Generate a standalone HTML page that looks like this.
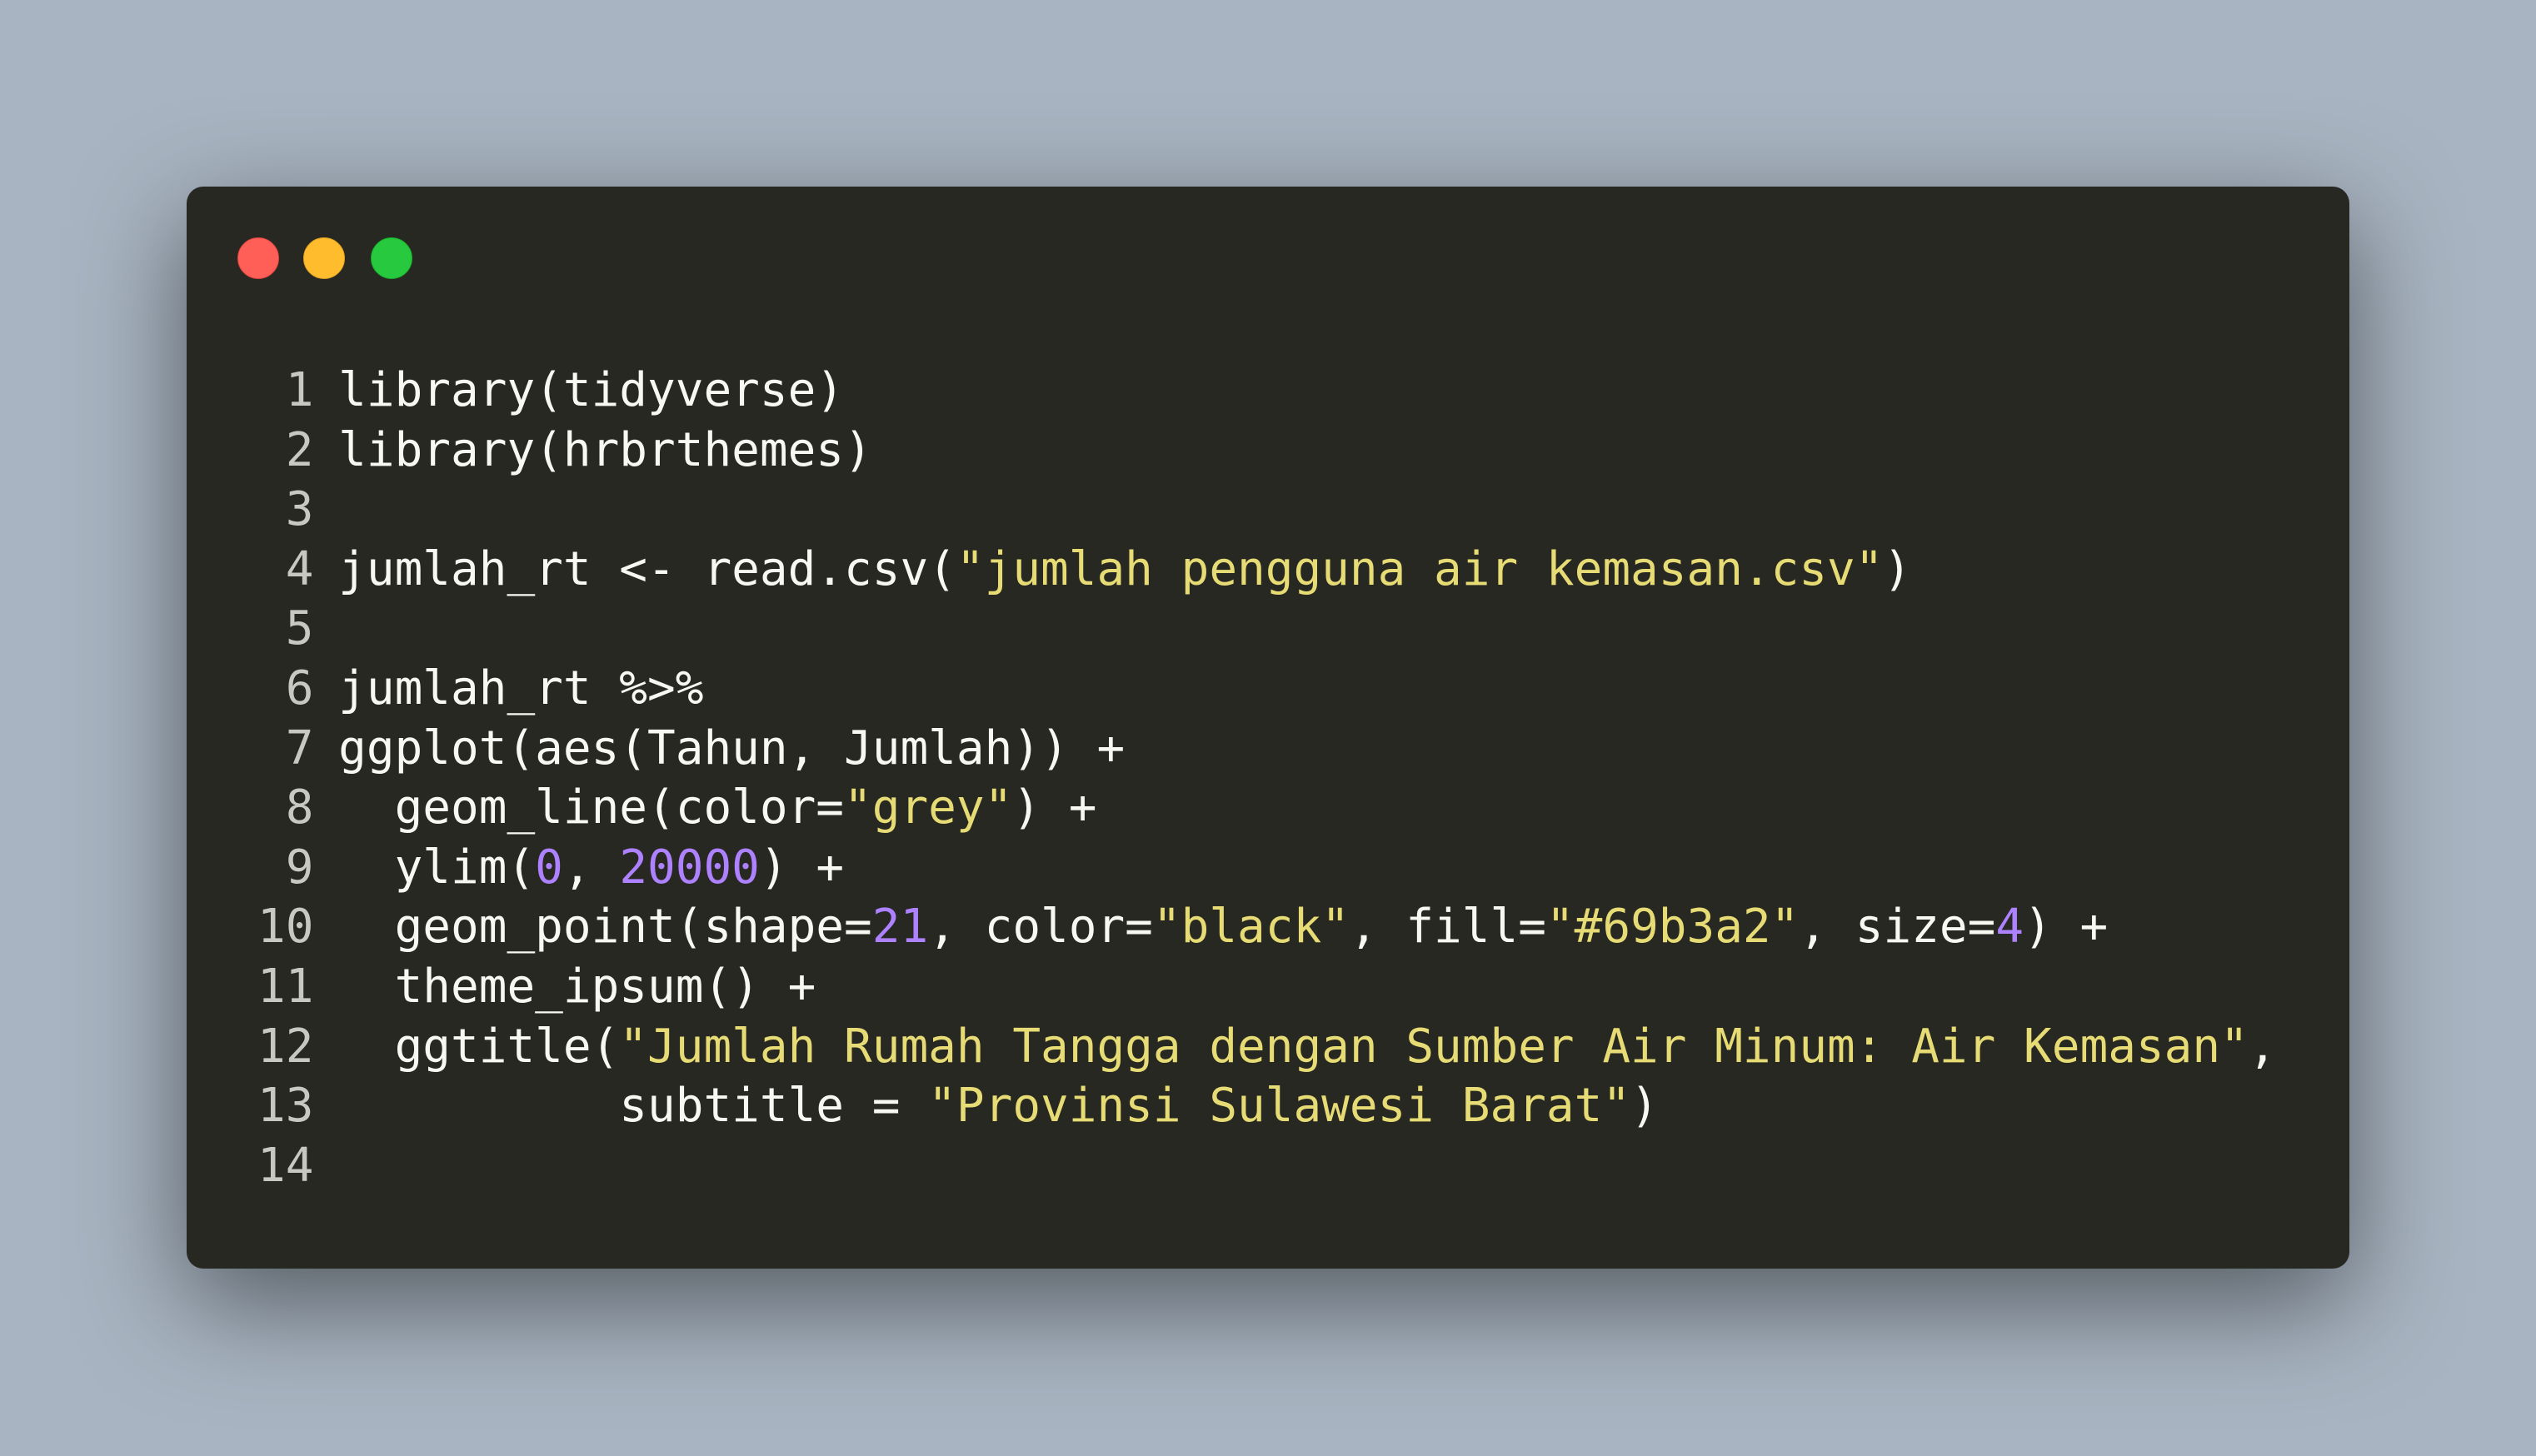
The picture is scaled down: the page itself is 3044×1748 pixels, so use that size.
<!DOCTYPE html>
<html><head><meta charset="utf-8"><style>
html,body{margin:0;padding:0;}
body{width:3044px;height:1748px;background:#a8b4c1;position:relative;overflow:hidden;}
.win{position:absolute;left:224px;top:224px;width:2596px;height:1299px;background:#272822;border-radius:20px;box-shadow:0 40px 140px rgba(0,0,0,0.5);}
.dot{position:absolute;top:61px;width:50px;height:50px;border-radius:50%;}
pre{position:absolute;left:81px;top:209px;margin:0;font-family:"DejaVu Sans Mono","Liberation Mono",monospace;font-size:56px;line-height:71.6px;color:#f8f8f2;}
.n{color:#c8c8c2;position:relative;left:4px;}
.s{color:#e6db74;}
.p{color:#ae81ff;}
</style></head><body>
<div class="win">
<div class="dot" style="left:61px;background:#ff5f56;border:1px solid #e0443e;box-sizing:border-box"></div>
<div class="dot" style="left:140px;background:#ffbd2e;border:1px solid #dea123;box-sizing:border-box"></div>
<div class="dot" style="left:221px;background:#27c93f;border:1px solid #1aab29;box-sizing:border-box"></div>
<pre><span class="n"> 1</span> library(tidyverse)
<span class="n"> 2</span> library(hrbrthemes)
<span class="n"> 3</span>
<span class="n"> 4</span> jumlah_rt &lt;- read.csv(<span class="s">"jumlah pengguna air kemasan.csv"</span>)
<span class="n"> 5</span>
<span class="n"> 6</span> jumlah_rt %&gt;%
<span class="n"> 7</span> ggplot(aes(Tahun, Jumlah)) +
<span class="n"> 8</span>   geom_line(color=<span class="s">"grey"</span>) +
<span class="n"> 9</span>   ylim(<span class="p">0</span>, <span class="p">20000</span>) +
<span class="n">10</span>   geom_point(shape=<span class="p">21</span>, color=<span class="s">"black"</span>, fill=<span class="s">"#69b3a2"</span>, size=<span class="p">4</span>) +
<span class="n">11</span>   theme_ipsum() +
<span class="n">12</span>   ggtitle(<span class="s">"Jumlah Rumah Tangga dengan Sumber Air Minum: Air Kemasan"</span>,
<span class="n">13</span>           subtitle = <span class="s">"Provinsi Sulawesi Barat"</span>)
<span class="n">14</span></pre>
</div>
</body></html>
